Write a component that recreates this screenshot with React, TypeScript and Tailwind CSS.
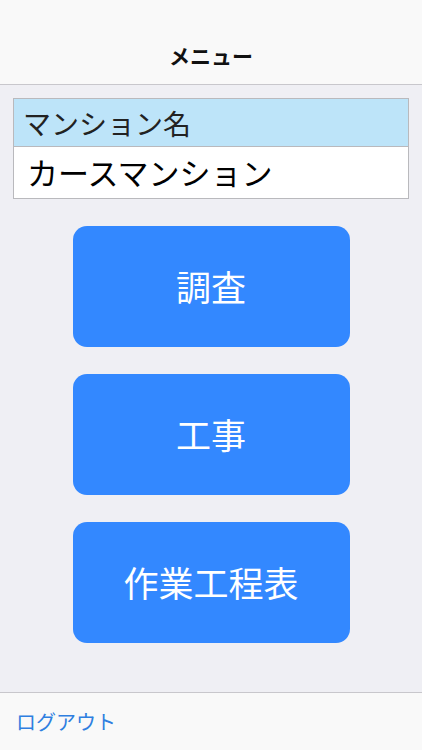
const FONT = "font-['Noto_Sans_CJK_JP','Noto_Sans',sans-serif]";

function MenuButton({ label }: { label: string }) {
  return (
    <button
      type="button"
      className="flex h-[121px] w-[277px] items-center justify-center rounded-[14px] bg-[#3388ff] text-[35px] text-white"
    >
      {label}
    </button>
  );
}

export default function App() {
  return (
    <div className={`flex h-[750px] w-[422px] flex-col bg-[#efeff4] ${FONT}`}>
      <header className="flex h-[85px] items-end justify-center border-b border-[#c8c7cc] bg-[#f9f9f9] pb-[13px]">
        <h1 className="text-[21px] font-bold text-[#111]">メニュー</h1>
      </header>

      <div className="mx-[13px] mt-[13px] border border-[#b9b9bd] bg-white">
        <div className="flex h-[48px] items-center border-b border-[#b9b9bd] bg-[#bde4f9] pl-[9px] text-[28px] text-[#222]">
          マンション名
        </div>
        <div className="flex h-[51px] items-center pl-[13px] text-[31px] text-black">
          カースマンション
        </div>
      </div>

      <div className="mt-[27px] flex flex-col items-center gap-[27px]">
        <MenuButton label="調査" />
        <MenuButton label="工事" />
        <MenuButton label="作業工程表" />
      </div>

      <footer className="mt-auto flex h-[58px] items-center border-t border-[#c8c7cc] bg-[#f9f9f9] pl-[16px]">
        <span className="text-[20px] text-[#2f7fe0]">ログアウト</span>
      </footer>
    </div>
  );
}
